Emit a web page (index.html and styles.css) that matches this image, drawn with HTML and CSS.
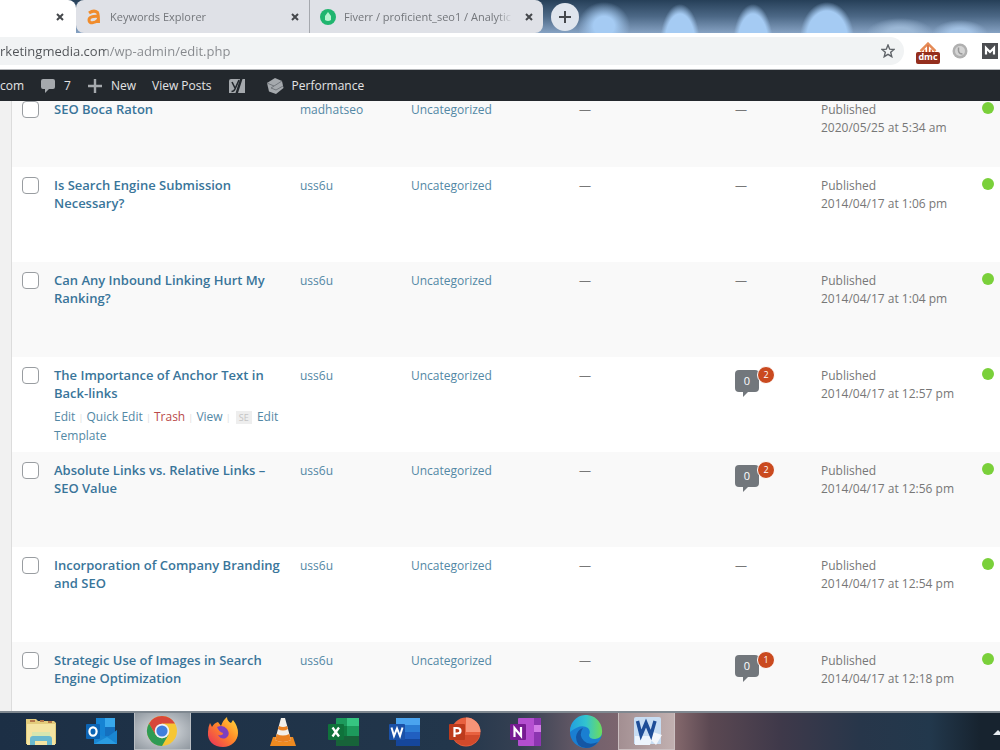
FILE: index.html
```
<!DOCTYPE html>
<html lang="en">
<head>
	<meta charset="UTF-8">
	<title>Posts</title>
	<link rel="stylesheet" href="styles.css">
</head>
<body>
	<div class="tabs">
		<div class="tab active">
			<button class="close" aria-label="Close tab"><svg width="8" height="8" viewBox="0 0 8 8"><path d="M1 1L7 7M7 1L1 7"/></svg></button>
		</div>
		<div class="tab tab-keywords">
			<svg class="favicon" width="16" height="16" viewBox="0 0 16 16"><path d="M3 4Q8 0.500 11.500 3.500Q12.500 5 12.500 14M12 7.500C7 7 3 8 3 11C3 15 9 14.500 12 11" fill="none" stroke="#f08c2c" stroke-width="3"/></svg>
			<span class="tab-title">Keywords Explorer</span>
			<button class="close" aria-label="Close tab"><svg width="8" height="8" viewBox="0 0 8 8"><path d="M1 1L7 7M7 1L1 7"/></svg></button>
		</div>
		<div class="tab tab-fiverr">
			<svg class="favicon" width="16" height="16" viewBox="0 0 16 16"><circle cx="8" cy="8" r="8" fill="#20b56f"/><path d="M8 3L11 7V11Q8 13 5 11V7Z" fill="#b6f3cf"/></svg>
			<span class="tab-title">Fiverr / proficient_seo1 / Analytic</span>
			<button class="close" aria-label="Close tab"><svg width="8" height="8" viewBox="0 0 8 8"><path d="M1 1L7 7M7 1L1 7"/></svg></button>
		</div>
		<button class="new-tab" aria-label="New tab"><svg width="12" height="12" viewBox="0 0 12 12"><path d="M6 0V12M0 6H12"/></svg></button>
	</div>

	<div class="toolbar">
		<div class="address">
			<input type="text" id="url" aria-label="Address" value="rketingmedia.com/wp-admin/edit.php">
			<button aria-label="Bookmark"><svg width="14" height="14" viewBox="0 0 14 14"><path d="M7 1L8.700 5.200L13 5.500L9.700 8.300L10.800 12.700L7 10.300L3.200 12.700L4.300 8.300L1 5.500L5.300 5.200Z" fill="none" stroke="#5f6368" stroke-width="1.400"/></svg></button>
		</div>
		<button class="ext ext-dmc" aria-label="DMC">
			<svg width="24" height="10" viewBox="0 0 24 12"><path d="M3 11L12 2L21 11" fill="none" stroke="#e58a55" stroke-width="3"/><path d="M12 4V12M8 9V12M16 9V12" stroke="#d6602c" stroke-width="2"/></svg>
			<span>dmc</span>
		</button>
		<button class="ext" aria-label="Extension"><svg width="16" height="16" viewBox="0 0 16 16"><circle cx="8" cy="8" r="7.500" fill="#b0b0b0"/><circle cx="8" cy="8" r="5" fill="#d4d4d4"/><path d="M6.500 4.500V8Q7 11 10.500 11" fill="none" stroke="#999" stroke-width="1.500"/></svg></button>
		<button class="ext" aria-label="Moz"><svg width="16" height="16" viewBox="0 0 16 16"><rect width="16" height="16" fill="#4b4d50"/><path d="M4 11.500V5L8 9L12 5V11.500" fill="none" stroke="#fff" stroke-width="2.200"/></svg></button>
	</div>

	<div class="adminbar">
		<a href="#" class="site">com</a>
		<a href="#" class="comments"><svg width="16" height="16" viewBox="0 0 16 16"><path d="M3 1H13Q15 1 15 3V9Q15 11 13 11H9L5 15V11H3Q1 11 1 9V3Q1 1 3 1Z" fill="#a5a9ad"/></svg>7</a>
		<a href="#" class="new"><svg width="16" height="16" viewBox="0 0 16 16"><path d="M8 1V15M1 8H15" stroke="#a5a9ad" stroke-width="2.400"/></svg>New</a>
		<a href="#" class="view">View Posts</a>
		<a href="#" class="yoast" aria-label="Yoast SEO"><svg width="18" height="16" viewBox="0 0 18 16"><path d="M3 1H12L7.500 15H1V3Q1 1 3 1ZM14.500 1H17V15H10Z" fill="#a5a9ad"/><path d="M4 4L7 10M11 2L7 11Q6 13.500 3.500 13.500" fill="none" stroke="#23282d" stroke-width="1.600"/></svg></a>
		<a href="#" class="perf"><svg width="18" height="16" viewBox="0 0 18 16"><path d="M1 5L9 0L16 3L17.500 10L10 16L3 13.500Z" fill="#a5a9ad"/><path d="M1 5L8 8L16 3M8 8L5 10L10 12L17 8" fill="none" stroke="#73787d" stroke-width="1"/></svg>Performance</a>
	</div>

	<div class="content">
		<table class="posts">
			<colgroup>
				<col class="col-cb"><col class="col-title"><col class="col-author"><col class="col-cats"><col class="col-tags"><col class="col-comments"><col class="col-date"><col class="col-seo">
			</colgroup>
			<tbody>
				<tr class="short">
					<td><input type="checkbox" aria-label="Select SEO Boca Raton"></td>
					<td><a class="title" href="#">SEO Boca Raton</a></td>
					<td><a href="#">madhatseo</a></td>
					<td><a href="#">Uncategorized</a></td>
					<td>—</td>
					<td>—</td>
					<td>Published<br>2020/05/25 at 5:34 am</td>
					<td><span class="dot"></span></td>
				</tr>
				<tr>
					<td><input type="checkbox" aria-label="Select Is Search Engine Submission Necessary?"></td>
					<td><a class="title" href="#">Is Search Engine Submission Necessary?</a></td>
					<td><a href="#">uss6u</a></td>
					<td><a href="#">Uncategorized</a></td>
					<td>—</td>
					<td>—</td>
					<td>Published<br>2014/04/17 at 1:06 pm</td>
					<td><span class="dot"></span></td>
				</tr>
				<tr>
					<td><input type="checkbox" aria-label="Select Can Any Inbound Linking Hurt My Ranking?"></td>
					<td><a class="title" href="#">Can Any Inbound Linking Hurt My Ranking?</a></td>
					<td><a href="#">uss6u</a></td>
					<td><a href="#">Uncategorized</a></td>
					<td>—</td>
					<td>—</td>
					<td>Published<br>2014/04/17 at 1:04 pm</td>
					<td><span class="dot"></span></td>
				</tr>
				<tr>
					<td><input type="checkbox" aria-label="Select The Importance of Anchor Text in Back-links"></td>
					<td>
						<a class="title" href="#">The Importance of Anchor Text in Back-links</a>
						<div class="actions"><a href="#">Edit</a> <i>|</i> <a href="#">Quick Edit</a> <i>|</i> <a class="trash" href="#">Trash</a> <i>|</i> <a href="#">View</a> <i>|</i> <b>SE</b> <a href="#">Edit<br>Template</a></div>
					</td>
					<td><a href="#">uss6u</a></td>
					<td><a href="#">Uncategorized</a></td>
					<td>—</td>
					<td><a class="bubble" href="#">0<span>2</span></a></td>
					<td>Published<br>2014/04/17 at 12:57 pm</td>
					<td><span class="dot"></span></td>
				</tr>
				<tr>
					<td><input type="checkbox" aria-label="Select Absolute Links vs. Relative Links"></td>
					<td><a class="title" href="#">Absolute Links vs. Relative Links – SEO Value</a></td>
					<td><a href="#">uss6u</a></td>
					<td><a href="#">Uncategorized</a></td>
					<td>—</td>
					<td><a class="bubble" href="#">0<span>2</span></a></td>
					<td>Published<br>2014/04/17 at 12:56 pm</td>
					<td><span class="dot"></span></td>
				</tr>
				<tr>
					<td><input type="checkbox" aria-label="Select Incorporation of Company Branding and SEO"></td>
					<td><a class="title" href="#">Incorporation of Company Branding and SEO</a></td>
					<td><a href="#">uss6u</a></td>
					<td><a href="#">Uncategorized</a></td>
					<td>—</td>
					<td>—</td>
					<td>Published<br>2014/04/17 at 12:54 pm</td>
					<td><span class="dot"></span></td>
				</tr>
				<tr>
					<td><input type="checkbox" aria-label="Select Strategic Use of Images in Search Engine Optimization"></td>
					<td><a class="title" href="#">Strategic Use of Images in Search Engine Optimization</a></td>
					<td><a href="#">uss6u</a></td>
					<td><a href="#">Uncategorized</a></td>
					<td>—</td>
					<td><a class="bubble" href="#">0<span>1</span></a></td>
					<td>Published<br>2014/04/17 at 12:18 pm</td>
					<td><span class="dot"></span></td>
				</tr>
			</tbody>
		</table>
	</div>

	<div class="taskbar">
		<div class="apps">
			<button aria-label="File Explorer"><svg width="34" height="32" viewBox="0 0 34 32"><path d="M2 3H12L14 5H30L32 7V28H2Z" fill="#e3cc7c"/><path d="M3 8H31V29H3Z" fill="#f4e4a2"/><path d="M6 5H11M16 5H20M24 6H28" stroke="#b5794b" stroke-width="2"/><path d="M8 16H26V21H8Z" fill="#d6e6b0"/><path d="M6 29V23Q6 20 9 20H25Q28 20 28 23V29H23V25H11V29Z" fill="#69b9cf"/></svg></button>
			<button aria-label="Outlook"><svg width="34" height="32" viewBox="0 0 34 32"><rect x="11" y="2" width="19" height="20" fill="#1583d3"/><path d="M20 2H30V11H20Z" fill="#38a8ec"/><path d="M20 11H30V20H20Z" fill="#1470bf"/><path d="M9 15L21 22L32 14V28H9Z" fill="#1a86d2"/><path d="M9 28L22 21L32 28Z" fill="#2a9ce2"/><rect x="1" y="8" width="14" height="15" rx="1" fill="#0c64b4"/><ellipse cx="8" cy="15.500" rx="3.600" ry="4.200" fill="none" stroke="#fff" stroke-width="2.200"/></svg></button>
			<button class="open" aria-label="Chrome"><svg width="32" height="32" viewBox="0 0 32 32"><circle cx="16" cy="16" r="15" fill="#f6c634"/><path d="M3 8.500A15 15 0 0 1 29 8.500H16L9.500 20Z" fill="#d8473a"/><path d="M3 8.500A15 15 0 0 0 16 31L22.500 19.700L16 23.500L9.500 19.700Z" fill="#2f9b54"/><circle cx="16" cy="16" r="7.300" fill="#eef2f6"/><circle cx="16" cy="16" r="5.600" fill="#3f7fdb"/></svg></button>
			<button aria-label="Firefox"><svg width="34" height="32" viewBox="0 0 34 32"><defs><linearGradient id="fox" x1="1" y1="0" x2="0" y2="1"><stop offset="0" stop-color="#ffe13f"/><stop offset=".45" stop-color="#ff8a27"/><stop offset="1" stop-color="#e8285e"/></linearGradient></defs><path d="M4 7L6 11Q8 7 12 6L15 10Q17 4 21 1Q21 5 25 7L27 4Q32 10 32 17C32 25 25 31 17 31C8 31 1 25 2 16Q2 11 4 7Z" fill="url(#fox)"/><path d="M11 11Q17 8 21 13Q25 19 20 22Q15 24 12 19Q17 20 17 17Q13 16 11 11Z" fill="#7c3fc0"/></svg></button>
			<button aria-label="VLC"><svg width="30" height="32" viewBox="0 0 30 32"><path d="M5 21H25L28 30H2Z" fill="#ee8a20"/><path d="M13 2H17L23 24Q15 28 7 24Z" fill="#f2efea"/><path d="M10 13L11 10Q15 12 19 10L20 13Q15 16 10 13ZM8.700 18Q15 21 21.300 18L23 24Q15 28 7 24Z" fill="#e98122"/></svg></button>
			<button aria-label="Excel"><svg width="34" height="32" viewBox="0 0 34 32"><rect x="9" y="2" width="23" height="28" rx="1" fill="#1d9a5c"/><path d="M20 2H32V10H20Z" fill="#36c481"/><path d="M9 10H20V20H9Z" fill="#107c41"/><path d="M9 20H32V30H9Z" fill="#176339"/><rect x="1" y="8" width="16" height="16" rx="1" fill="#0f723b"/><path d="M5.500 11.500L12 20.500M12 11.500L5.500 20.500" stroke="#fff" stroke-width="2.300"/></svg></button>
			<button aria-label="Word"><svg width="34" height="32" viewBox="0 0 34 32"><rect x="8" y="2" width="24" height="28" rx="1" fill="#2b7cd3"/><path d="M8 2H32V9H8Z" fill="#4ba4ef"/><path d="M8 16H32V23H8Z" fill="#215fc0"/><path d="M8 23H32V30H8Z" fill="#15469b"/><rect x="1" y="8" width="16" height="16" rx="1" fill="#1a51a8"/><path d="M3.500 11.500L6 20L9 12.500L12 20L14.500 11.500" fill="none" stroke="#fff" stroke-width="2"/></svg></button>
			<button aria-label="PowerPoint"><svg width="34" height="32" viewBox="0 0 34 32"><circle cx="18" cy="16" r="14.500" fill="#e8613f"/><path d="M18 1.500A14.500 14.500 0 0 1 32.500 16H18Z" fill="#f79377"/><path d="M4 19H32A14.500 14.500 0 0 1 4 19Z" fill="#d24a2b"/><rect x="1" y="8" width="16" height="16" rx="1" fill="#bd3b1c"/><path d="M6.500 21V12H9Q12.500 12 12.500 15Q12.500 17.500 9 17.500H7" fill="none" stroke="#fff" stroke-width="2.200"/></svg></button>
			<button aria-label="OneNote"><svg width="34" height="32" viewBox="0 0 34 32"><rect x="9" y="2" width="23" height="28" rx="1" fill="#b44ed0"/><path d="M25 2H32V30H25Z" fill="#8c35b0"/><path d="M25 9H32V16H25Z" fill="#d17be6"/><rect x="1" y="8" width="16" height="16" rx="1" fill="#771b92"/><path d="M5.500 21V12L12 20V11" fill="none" stroke="#fff" stroke-width="2.200"/></svg></button>
			<button aria-label="Edge"><svg width="34" height="34" viewBox="0 0 34 34"><defs><linearGradient id="edge" x1="0" y1="0" x2="1" y2="0"><stop offset="0" stop-color="#229fe0"/><stop offset=".5" stop-color="#32c4cf"/><stop offset="1" stop-color="#6edc5a"/></linearGradient></defs><circle cx="17" cy="17" r="16" fill="#1a7fd2"/><path d="M1 17A16 16 0 0 1 33 15Q34 23 26 24Q20 24 20 20Q22 16 19 13Q12 8 1 17Z" fill="url(#edge)"/><path d="M14 13Q9 20 15 26Q20 31 29 27Q24 33 17 33Q7 32 7 22Q8 15 14 13Z" fill="#1456a4"/></svg></button>
			<button class="open-doc" aria-label="Word document"><svg width="32" height="32" viewBox="0 0 32 32"><path d="M5 2H28Q30 2 30 4V29H3V4Q3 2 5 2Z" fill="#c8ddf3"/><path d="M4 21H22L19 30H4Z" fill="#edf5fd"/><path d="M22 17L31 20L25 30L20 25Z" fill="#f3f6fb"/><path d="M6.500 6L10 20L15 8L20 20L24 6" fill="none" stroke="#1e4d97" stroke-width="3.400"/></svg></button>
		</div>
		<svg class="tray" width="8" height="8" viewBox="0 0 8 8"><path d="M1 7L6 2L8 4V7Z" fill="#e6ebf0"/></svg>
	</div>
</body>
</html>
```
FILE: styles.css
```
*{
	box-sizing: border-box;
}
body{
	margin: 0;
	height: 100vh;
	display: flex;
	flex-direction: column;
	overflow: hidden;
	font-family: "Open Sans", "Noto Sans", sans-serif;
	font-size: 12px;
	line-height: 18px;
	color: #777;
	background: #f1f1f1;
}
a{
	color: #5388a5;
	text-decoration: none;
}
button{
	padding: 0;
	border: 0;
	background: none;
	display: flex;
	align-items: center;
	justify-content: center;
	font-family: inherit;
}
svg{
	display: block;
	flex: none;
}

/* browser tabs */
.tabs{
	display: flex;
	align-items: center;
	height: 33px;
	flex: none;
	background:
		radial-gradient(ellipse 26px 24px at 604px 26px, #a5cbf3 40%, transparent),
		radial-gradient(ellipse 20px 40px at 680px 44px, #a5cbf3 75%, transparent),
		radial-gradient(ellipse 20px 40px at 753px 44px, #a5cbf3 75%, transparent),
		radial-gradient(ellipse 27px 36px at 827px 38px, #a5cbf3 75%, transparent),
		radial-gradient(ellipse 34px 16px at 900px 34px, #9cb8d6 40%, transparent),
		radial-gradient(ellipse 28px 14px at 960px 34px, #a3c2e4 40%, transparent),
		linear-gradient(#263f58, #4c6886 50%, #86a2c3);
}
.tab{
	display: flex;
	align-items: center;
	height: 33px;
	padding: 0 10px;
	background: #dfe1e7;
}
.tab.active{
	width: 76px;
	justify-content: flex-end;
	padding-right: 12px;
	background: #fff;
	border-radius: 0 8px 0 0;
}
.tab-keywords{
	width: 234px;
	border-right: 1px solid #a5a8ae;
	border-radius: 8px 0 0 8px;
}
.tab-fiverr{
	width: 233px;
	border-radius: 0 8px 8px 0;
}
.tab-title{
	flex: 1;
	margin: 0 12px 0 8px;
	overflow: hidden;
	white-space: nowrap;
	font-size: 11px;
	color: #73767b;
	-webkit-mask-image: linear-gradient(90deg, #000 90%, transparent);
	mask-image: linear-gradient(90deg, #000 90%, transparent);
}
.close svg,
.new-tab svg{
	stroke: #45484c;
	stroke-width: 2;
}
.new-tab{
	width: 28px;
	height: 28px;
	margin-left: 8px;
	border-radius: 50%;
	background: #dfe5ed;
}

/* address bar */
.toolbar{
	display: flex;
	align-items: center;
	gap: 12px;
	height: 37px;
	flex: none;
	background: #fff;
	border-bottom: 1px solid #b5b7ba;
}
.toolbar .ext:last-child{
	margin: 0 2px;
}
.address{
	flex: 1;
	display: flex;
	align-items: center;
	height: 28px;
	padding-right: 9px;
	border-radius: 0 14px 14px 0;
	background: #f1f3f4;
}
/* host dark, path grey */
.address input{
	flex: 1;
	min-width: 0;
	padding: 0;
	border: 0;
	outline: 0;
	background: linear-gradient(90deg, #4f5256 106px, #85888c 106px);
	-webkit-background-clip: text;
	background-clip: text;
	color: transparent;
	font: 13px/18px "Open Sans", "Noto Sans", sans-serif;
}
.ext-dmc{
	flex-direction: column;
	padding-top: 4px;
}
.ext-dmc span{
	width: 24px;
	height: 12px;
	border-radius: 2px;
	background: #942e1d;
	color: #fff;
	font-size: 9px;
	font-weight: bold;
	line-height: 10px;
}

/* wordpress bar */
.adminbar{
	display: flex;
	align-items: center;
	height: 31px;
	flex: none;
	background: #23282d;
}
.adminbar a{
	display: flex;
	align-items: center;
	gap: 8px;
	margin-right: 16px;
	color: #e3e4e5;
}
.adminbar .yoast{
	margin-right: 20px;
}

/* posts list */
.content{
	flex: 1;
	min-height: 0;
	overflow: hidden;
	margin-left: 11px;
	border-left: 1px solid #dcdcdc;
	background: #fff;
}
.posts{
	width: 100%;
	margin-top: -10px;
	table-layout: fixed;
	border-collapse: collapse;
}
.col-cb{ width: 34px; }
.col-author{ width: 111px; }
.col-cats{ width: 168px; }
.col-tags{ width: 156px; }
.col-comments{ width: 86px; }
.col-date{ width: 161px; }
.col-seo{ width: 26px; }
.posts tr{
	height: 95px;
}
.posts tr.short{
	height: 76px;
}
.posts tr:nth-child(odd){
	background: #f9f9f9;
}
.posts td{
	padding: 10px 8px 6px;
	vertical-align: top;
}
.posts td:first-child{
	padding-left: 10px;
	padding-right: 0;
}
.posts td:nth-child(2){
	padding-top: 9px;
}
.posts td:nth-child(7){
	white-space: nowrap;
}
.posts .title{
	display: block;
	font-size: 13px;
	font-weight: 600;
	color: #39759a;
}
.posts input{
	appearance: none;
	display: block;
	width: 17px;
	height: 17px;
	margin: 0;
	border: 1px solid #999da1;
	border-radius: 4px;
	background: #fff;
}
.actions{
	margin-top: 6px;
}
.actions i{
	color: #ddd;
	font-size: 9px;
	font-style: normal;
}
.actions b{
	margin: 0 2px;
	padding: 0 3px;
	background: #eee;
	color: #c4c4c4;
	font-size: 9px;
	font-weight: normal;
}
.actions .trash{
	color: #b94a4a;
}
.bubble{
	position: relative;
	display: block;
	width: 24px;
	height: 22px;
	margin-top: 3px;
	border-radius: 4px;
	background: #72777c;
	color: #fff;
	font-size: 11px;
	line-height: 22px;
	text-align: center;
}
.bubble:after{
	content: "";
	position: absolute;
	left: 8px;
	top: 22px;
	border-top: 5px solid #72777c;
	border-right: 5px solid transparent;
}
.bubble span{
	position: absolute;
	left: 22px;
	top: -4px;
	width: 18px;
	height: 18px;
	border: 1px solid #fff;
	border-radius: 50%;
	background: #ca4a1f;
	font-size: 9px;
	line-height: 16px;
}
.dot{
	display: block;
	width: 12px;
	height: 12px;
	margin-top: 1px;
	border-radius: 50%;
	background: #7ad03a;
}

/* taskbar */
.taskbar{
	display: flex;
	justify-content: space-between;
	align-items: center;
	height: 39px;
	flex: none;
	border-top: 2px solid #7f8890;
	background: linear-gradient(90deg, #1c2f45 0, #22364b 45%, #354052 52%, #76626d 60%, #8a6d70 67%, #5b4852 71%, #3f394a 78%, #27364a 86%, #22384c 93%, #17232f 98%);
}
.apps{
	display: grid;
	grid-template-columns: repeat(11, 1fr);
	width: 666px;
	height: 37px;
	margin-left: 11px;
}
.apps button{
	overflow: hidden;
}
.apps .open,
.apps .open-doc{
	margin: 0 2px;
	border: 1px solid #b9bec3;
	border-top: 0;
	background: radial-gradient(#e2e5e8, #8f979f);
}
.apps .open-doc{
	border-color: #cbbfc0;
	background: linear-gradient(90deg, #a38f92, #c1b0b0);
}
```
